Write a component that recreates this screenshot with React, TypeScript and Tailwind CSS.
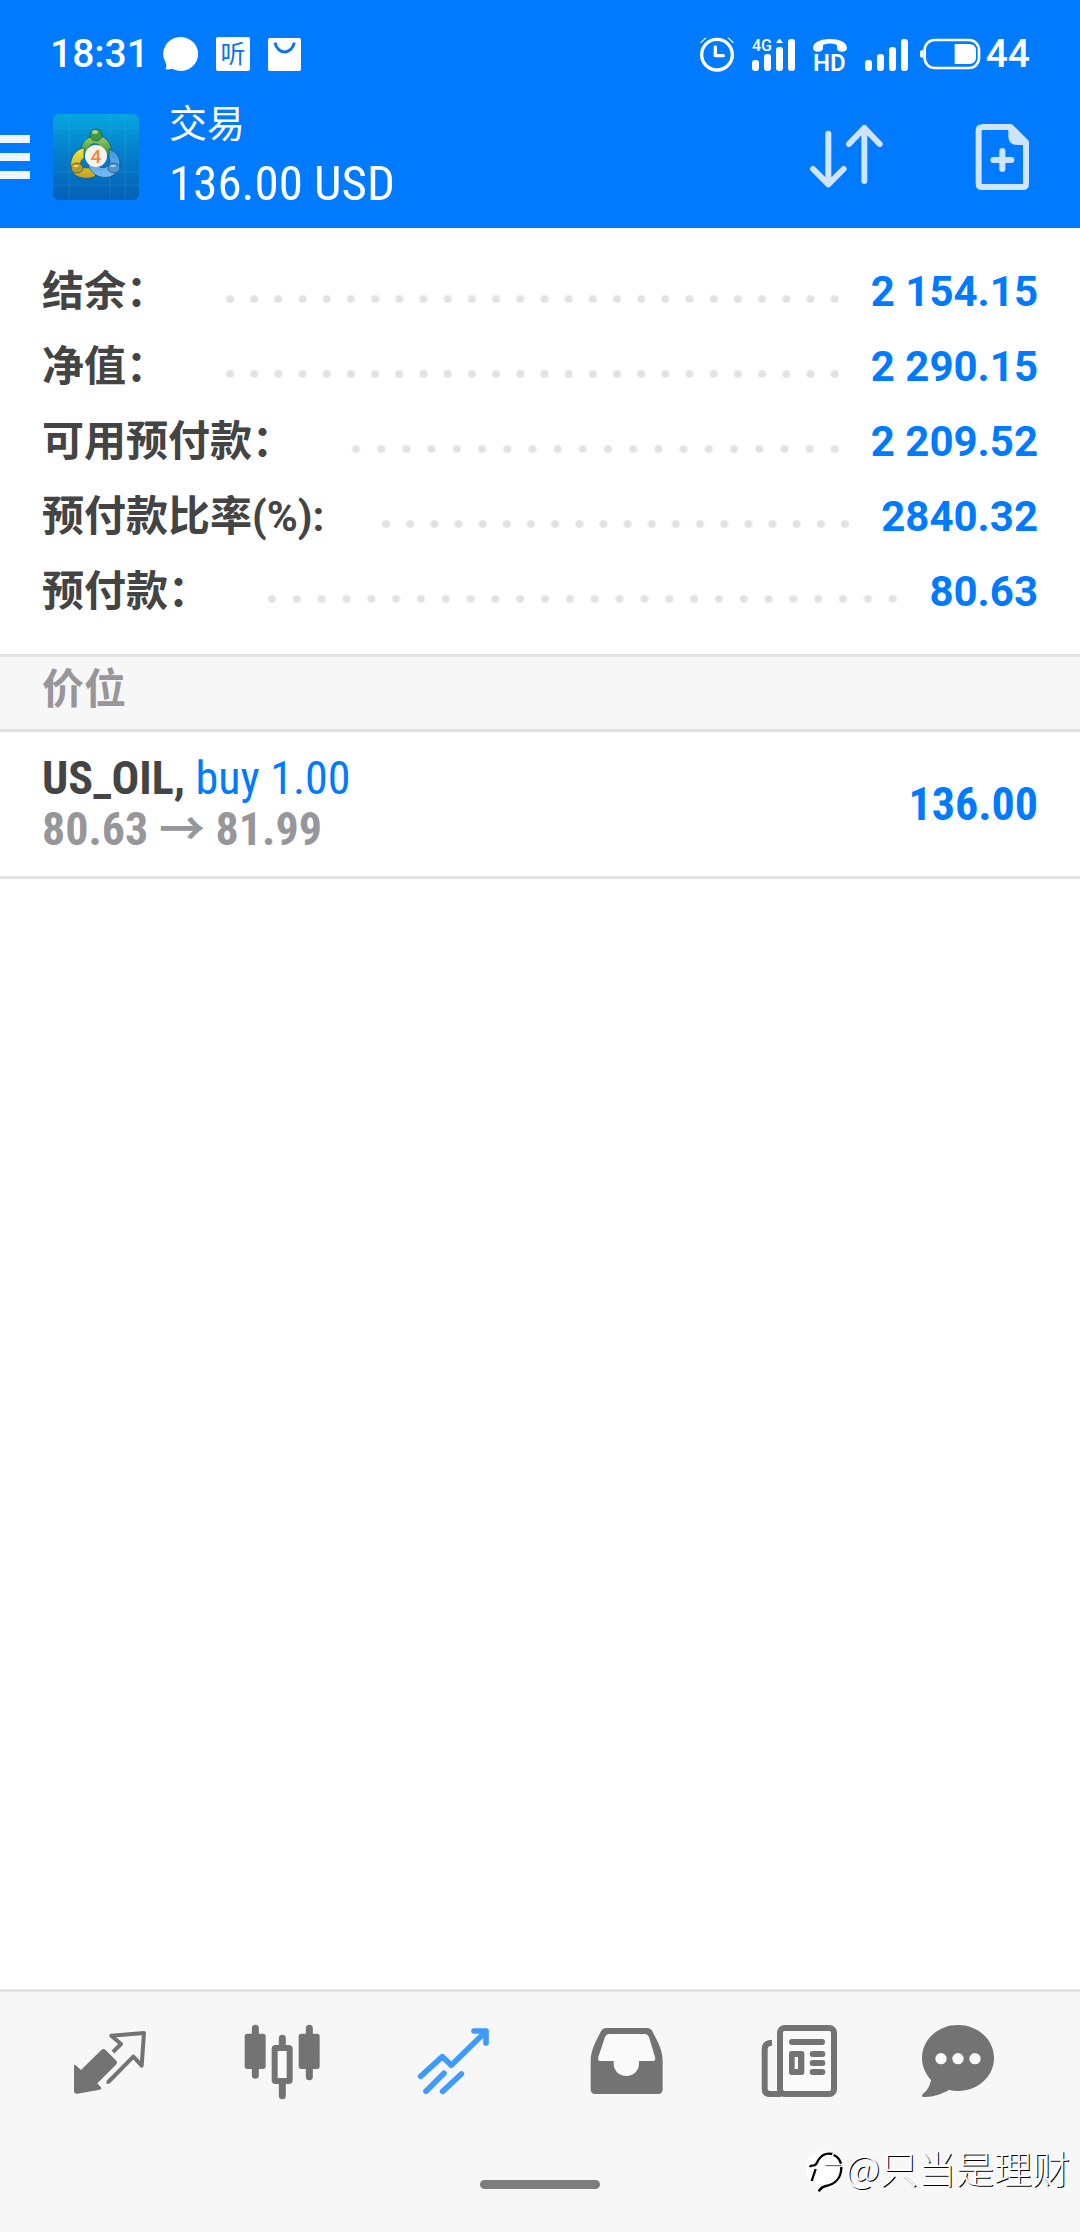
import type { ReactNode } from "react";

const latin = "font-['Roboto','Noto_Sans_CJK_SC',sans-serif]";
const condensed = "font-['Roboto_Condensed','Roboto','Noto_Sans_CJK_SC',sans-serif]";

const summary = [
  { label: "结余：", value: "2 154.15" },
  { label: "净值：", value: "2 290.15" },
  { label: "可用预付款：", value: "2 209.52" },
  { label: "预付款比率(%):", value: "2840.32" },
  { label: "预付款：", value: "80.63" },
];

function StatusBar() {
  return (
    <div className="flex h-[108px] items-center justify-between pr-[50px] pl-[50px] text-[39px] leading-[48px] font-medium">
      <div className="flex items-center">
        <span>18:31</span>
        <svg className="ml-[14px] h-[34px] w-[35px]" viewBox="0 0 105 102" fill="currentColor" aria-hidden="true">
          <path d="M53 0a52 51 0 1 1-22 97c-8-4-15 3-24-1 5-6 3-13 1-19A52 51 0 0 1 53 0z" />
        </svg>
        <span className="ml-[18px] flex size-[34px] items-center justify-center rounded-xs bg-white text-[25px] leading-none font-normal text-[#0b74e8]">
          听
        </span>
        <svg className="ml-[18px] size-[33px]" viewBox="0 0 99 99" aria-hidden="true">
          <rect width="99" height="99" rx="5" fill="#fff" />
          <path d="M21 14c8 37 49 37 58 0" fill="none" stroke="#0b74e8" strokeWidth="9" />
        </svg>
      </div>
      <div className="flex items-center">
        <svg className="h-[36px] w-[36px]" viewBox="0 0 108 108" fill="none" stroke="currentColor" aria-hidden="true">
          <circle cx="54" cy="56" r="46" strokeWidth="10" />
          <path d="M49 33v26h24" strokeWidth="10" strokeLinecap="round" strokeLinejoin="round" />
          <path d="M3 20 18 5h5L6 22zM105 20 90 5h-5l17 17z" fill="currentColor" stroke="none" />
        </svg>
        <svg className="ml-[16px] h-[36px] w-[45px]" viewBox="0 0 45 36" fill="currentColor" aria-hidden="true">
          <text x="1" y="15" fontSize="16" fontWeight="500">4G</text>
          <rect x="1" y="24" width="7" height="11" rx="3" />
          <rect x="13" y="18" width="7" height="17" rx="3" />
          <rect x="25" y="11" width="7" height="24" rx="3" />
          <rect x="37" y="3" width="7" height="32" rx="3" />
          <path d="m25 7 3-4h1l3 4z" />
        </svg>
        <svg className="ml-[16px] h-[36px] w-[36px] overflow-visible" viewBox="0 0 36 36" fill="currentColor" aria-hidden="true">
          <path d="M1 12C1 0 35 0 35 12c0 5-10 5-10 0V9c-5-2-9-2-14 0v3c0 5-10 5-10 0z" />
          <text x="1" y="35" fontSize="24" fontWeight="600">HD</text>
        </svg>
        <svg className="ml-[16px] h-[36px] w-[45px]" viewBox="0 0 45 36" fill="currentColor" aria-hidden="true">
          <rect x="1" y="24" width="7" height="11" rx="3" />
          <rect x="13" y="18" width="7" height="17" rx="3" />
          <rect x="25" y="11" width="7" height="24" rx="3" />
          <rect x="37" y="3" width="7" height="32" rx="3" />
        </svg>
        <svg className="ml-[11px] h-[36px] w-[61px]" viewBox="0 0 183 108" aria-hidden="true">
          <rect x="14" y="12" width="163" height="84" rx="30" fill="none" stroke="#fff" strokeWidth="8" />
          <path d="M10 42v24a12 12 0 0 1 0-24zM104 24h44q20 0 20 20v20q0 20-20 20h-44z" fill="#fff" />
        </svg>
        <span className="ml-[5px]">44</span>
      </div>
    </div>
  );
}

function AppLogo() {
  return (
    <svg className="size-[86px]" viewBox="0 0 86 86" role="img" aria-label="MetaTrader 4">
      <defs>
        <linearGradient id="bg" x1="0" y1="0" x2="0" y2="1">
          <stop offset="0" stopColor="#06a6e0" />
          <stop offset="0.45" stopColor="#047fcb" />
          <stop offset="1" stopColor="#0560b6" />
        </linearGradient>
        <linearGradient id="green" x1="0" y1="0" x2="0" y2="1">
          <stop offset="0" stopColor="#9ad06a" />
          <stop offset="1" stopColor="#2f8f3a" />
        </linearGradient>
        <linearGradient id="yellow" x1="0" y1="0" x2="0" y2="1">
          <stop offset="0" stopColor="#efe243" />
          <stop offset="1" stopColor="#c2a21c" />
        </linearGradient>
        <linearGradient id="blue" x1="0" y1="0" x2="0" y2="1">
          <stop offset="0" stopColor="#3e93dc" />
          <stop offset="1" stopColor="#79bdf0" />
        </linearGradient>
      </defs>
      <rect width="86" height="86" rx="6" fill="url(#bg)" />
      <path d="M0 14h86M0 58h86M0 71h86M16 0v86M57 0v86M72 0v86" stroke="#5fc4f0" strokeOpacity="0.18" />
      <g stroke="#14456b" strokeOpacity="0.6" strokeWidth="1">
        <path d="M28 39C26 18 58 14 59 39c-4 5-8 3-10 0 1-12-14-12-14-2-2 3-5 4-7 2z" fill="url(#green)" />
        <path d="M31 34C17 36 12 58 26 63c6 2 14 2 17-2-1-5-5-8-9-7-8 0-8-7-3-10z" fill="url(#yellow)" />
        <path d="M56 35c14 4 15 24 0 28-9 2-18-3-21-12 4-3 8-2 10 1 7 5 15-2 11-8z" fill="url(#blue)" />
        <circle cx="43" cy="21" r="6" fill="#3f9b3f" />
        <ellipse cx="24" cy="54" rx="6" ry="5" fill="#b99a28" />
        <ellipse cx="61" cy="54" rx="6" ry="5" fill="#4e96cf" />
      </g>
      <ellipse cx="42" cy="18" rx="3" ry="2" fill="#d0f0b8" opacity="0.7" />
      <ellipse cx="23" cy="52" rx="3" ry="1" fill="#fff6b8" opacity="0.7" />
      <ellipse cx="60" cy="52" rx="3" ry="1" fill="#dff2ff" opacity="0.7" />
      <circle cx="43" cy="42" r="11" fill="#f6f2ef" />
      <text x="43" y="49" textAnchor="middle" fontSize="19" fontWeight="500" fill="#ee8a3a">4</text>
    </svg>
  );
}

function TitleBar() {
  return (
    <div className="flex h-[98px] items-center">
      <button type="button" aria-label="菜单" className="flex h-[44px] w-[30px] flex-col justify-between">
        <span className="h-2 w-full bg-[#f0f6ff]" />
        <span className="h-2 w-full bg-[#f0f6ff]" />
        <span className="h-2 w-full bg-[#f0f6ff]" />
      </button>
      <div className="ml-[23px]">
        <AppLogo />
      </div>
      <div className="ml-[30px] flex-1">
        <h1 className="text-[38px] leading-[54px] font-normal">交易</h1>
        <p className={`${condensed} text-[49px] leading-[66px]`}>136.00 USD</p>
      </div>
      <button type="button" aria-label="排序" className="mr-[91px] text-[#cfe4ff]">
        <svg className="h-[66px] w-[75px]" viewBox="0 0 225 198" fill="none" stroke="currentColor" strokeWidth="18" strokeLinecap="round" strokeLinejoin="round">
          <path d="M58 29v150M12 135l46 46 46-46M166 171V13M120 60l46-48 46 48" />
        </svg>
      </button>
      <button type="button" aria-label="新订单" className="mr-[50px] text-[#cfe4ff]">
        <svg className="h-[66px] w-[55px]" viewBox="0 0 165 198" fill="none">
          <path d="M25 9h82l46 46v124q0 10-10 10H21q-10 0-10-10V19q0-10 14-10z" stroke="currentColor" strokeWidth="18" strokeLinejoin="round" />
          <path d="M100 9v28q0 26 28 26h30V48L118 9z" fill="currentColor" />
          <path d="M55 108h54M82 81v54" stroke="currentColor" strokeWidth="18" strokeLinecap="round" />
        </svg>
      </button>
    </div>
  );
}

function NavIcon({ label, viewBox, narrow, active, children }: { label: string; viewBox: string; narrow?: boolean; active?: boolean; children: ReactNode }) {
  return (
    <button type="button" aria-label={label} aria-current={active ? "page" : undefined} className={active ? "text-[#3d9aff]" : "text-[#737373]"}>
      <svg className={narrow ? "h-[80px] w-[72px]" : "size-[80px]"} viewBox={viewBox} fill="currentColor">
        {children}
      </svg>
    </button>
  );
}

function BottomBar() {
  return (
    <footer className="relative border-t-3 border-[#e3e3e3] bg-[#f7f7f7] pt-[30px]">
      <nav className="flex gap-[84px] pr-[86px] pl-[70px]">
        <div className="flex flex-1 justify-between">
          <NavIcon label="行情" viewBox="90 156 240 240">
            <path d="M102 287q2-6 7 0l14 13 61-60q6-6 12-1l33 33q5 6-1 12l-56 56 11 12q4 5-4 7l-67 12q-10 1-10-9z" />
            <path d="m219 246 24-24-29-25 98-8-7 98-25-27-72 73q-3 3-8 2" fill="none" stroke="currentColor" strokeWidth="12" strokeLinejoin="round" />
          </NavIcon>
          <NavIcon label="图表" viewBox="604 156 240 240">
            <rect x="612" y="191" width="63" height="106" rx="8" />
            <rect x="774" y="191" width="63" height="106" rx="8" />
            <path d="M644 175v141M806 175v145M725 205v30M725 335v42" stroke="currentColor" strokeWidth="21" strokeLinecap="round" />
            <rect x="702" y="234" width="45" height="99" rx="3" fill="#fafafa" stroke="currentColor" strokeWidth="18" />
          </NavIcon>
          <NavIcon label="交易" viewBox="1122 156 240 240" active>
            <path d="m1142 319 65-59 27 26 104-102M1302 183h36v36M1158 364l54-54M1208 364l56-52" fill="none" stroke="currentColor" strokeWidth="17" strokeLinecap="round" strokeLinejoin="round" />
          </NavIcon>
          <NavIcon label="历史" viewBox="78 156 240 240">
            <path d="M140 174h120q12 0 17 10c18 35 31 56 31 90v84q0 14-14 14H106q-14 0-14-14v-84c0-34 13-55 31-90q5-10 17-10z" />
            <path d="M147 192h108q8 0 12 9l18 60q3 12-6 12h-42v8c0 20-16 37-38 37s-38-17-38-37v-8h-40q-9 0-6-12l20-60q4-9 12-9z" fill="#fafafa" />
          </NavIcon>
          <NavIcon label="新闻" viewBox="596 156 240 240">
            <g fill="none" stroke="currentColor" strokeWidth="18">
              <rect x="662" y="174" width="162" height="198" rx="14" fill="#fafafa" />
              <path d="M638 218q-22 0-22 20v118q0 16 16 16h34" />
              <path d="M698 216h90M760 252h29M760 279h29M760 306h29" strokeLinecap="round" />
            </g>
            <path fillRule="evenodd" d="M697 243h30q8 0 8 8v56q0 8-8 8h-30q-8 0-8-8v-56q0-8 8-8zm9 18v36h10v-36z" />
          </NavIcon>
        </div>
        <NavIcon label="聊天" viewBox="1086 156 216 240" narrow>
          <path d="M1194 165c60 0 108 44 108 99s-48 99-108 99q-14 0-27-3c-22 12-46 21-72 21-12 0-10-6-4-11 13-11 19-24 22-40-16-18-27-40-27-66 0-55 48-99 108-99z" />
          <circle cx="1143" cy="266" r="17" fill="#fafafa" />
          <circle cx="1194" cy="266" r="17" fill="#fafafa" />
          <circle cx="1245" cy="266" r="17" fill="#fafafa" />
        </NavIcon>
      </nav>
      <div className="flex h-[130px] items-start justify-center pt-[78px]">
        <div className="h-[9px] w-[120px] rounded-full bg-[#7d7d7d]" />
      </div>
      <div className="absolute right-[10px] bottom-[39px] flex items-center text-white">
        <svg className="mt-2 h-[44px] w-[40px]" viewBox="0 0 120 132" fill="none" aria-hidden="true">
          <circle cx="54" cy="58" r="52" fill="#fff" />
          <path d="M14 54c3-5 6-5 12-5 10-1 9-8 14-16 10-16 25-22 42-18M32 60l-12 36" stroke="#000" strokeWidth="7" />
          <path d="M62 50h47" stroke="#555" strokeWidth="3" />
          <path d="M86 18c12 5 19 16 22 26M109 54c0 32-18 52-46 57-12 2-18 10-22 16" stroke="#000" strokeWidth="7" />
        </svg>
        <span className="font-['Noto_Sans_CJK_SC',sans-serif] text-[38px] leading-[52px] font-light [text-shadow:1px_1px_0_#000]">@只当是理财</span>
      </div>
    </footer>
  );
}

export default function App() {
  return (
    <div lang="zh-CN" className={`${latin} flex min-h-screen flex-col bg-white text-[#444444]`}>
      <header className="bg-[#007aff] pb-[22px] text-white">
        <StatusBar />
        <TitleBar />
      </header>
      <main className="flex-1">
        <dl className="px-[42px] pt-[26px] pb-[25px] text-[42px] leading-[75px] font-bold">
          {summary.map((row) => (
            <div key={row.label} className="flex h-[75px] items-center">
              <dt>{row.label}</dt>
              <div className="mt-[15px] mr-[24px] ml-[50px] h-2 flex-1 bg-[radial-gradient(circle,#e2e2e2_3px,transparent_5px)] bg-[length:24px_8px] [background-repeat:space]" />
              <dd className="text-[#007aff]">{row.value}</dd>
            </div>
          ))}
        </dl>
        <h2 className="h-[78px] border-y-3 border-[#e3e3e3] bg-[#f7f7f7] px-[42px] text-[42px] leading-[66px] font-bold text-[#97979b]">价位</h2>
        <div className={`${condensed} flex items-center justify-between border-b-3 border-[#e3e3e3] px-[42px] pt-[21px] pb-[21px] text-[46px] leading-[51px] font-bold`}>
          <div>
            <p>
              US_OIL, <span className="font-normal text-[#007aff]">buy 1.00</span>
            </p>
            <p className="text-[#97979b]">80.63 → 81.99</p>
          </div>
          <p className="text-[#007aff]">136.00</p>
        </div>
      </main>
      <BottomBar />
    </div>
  );
}
